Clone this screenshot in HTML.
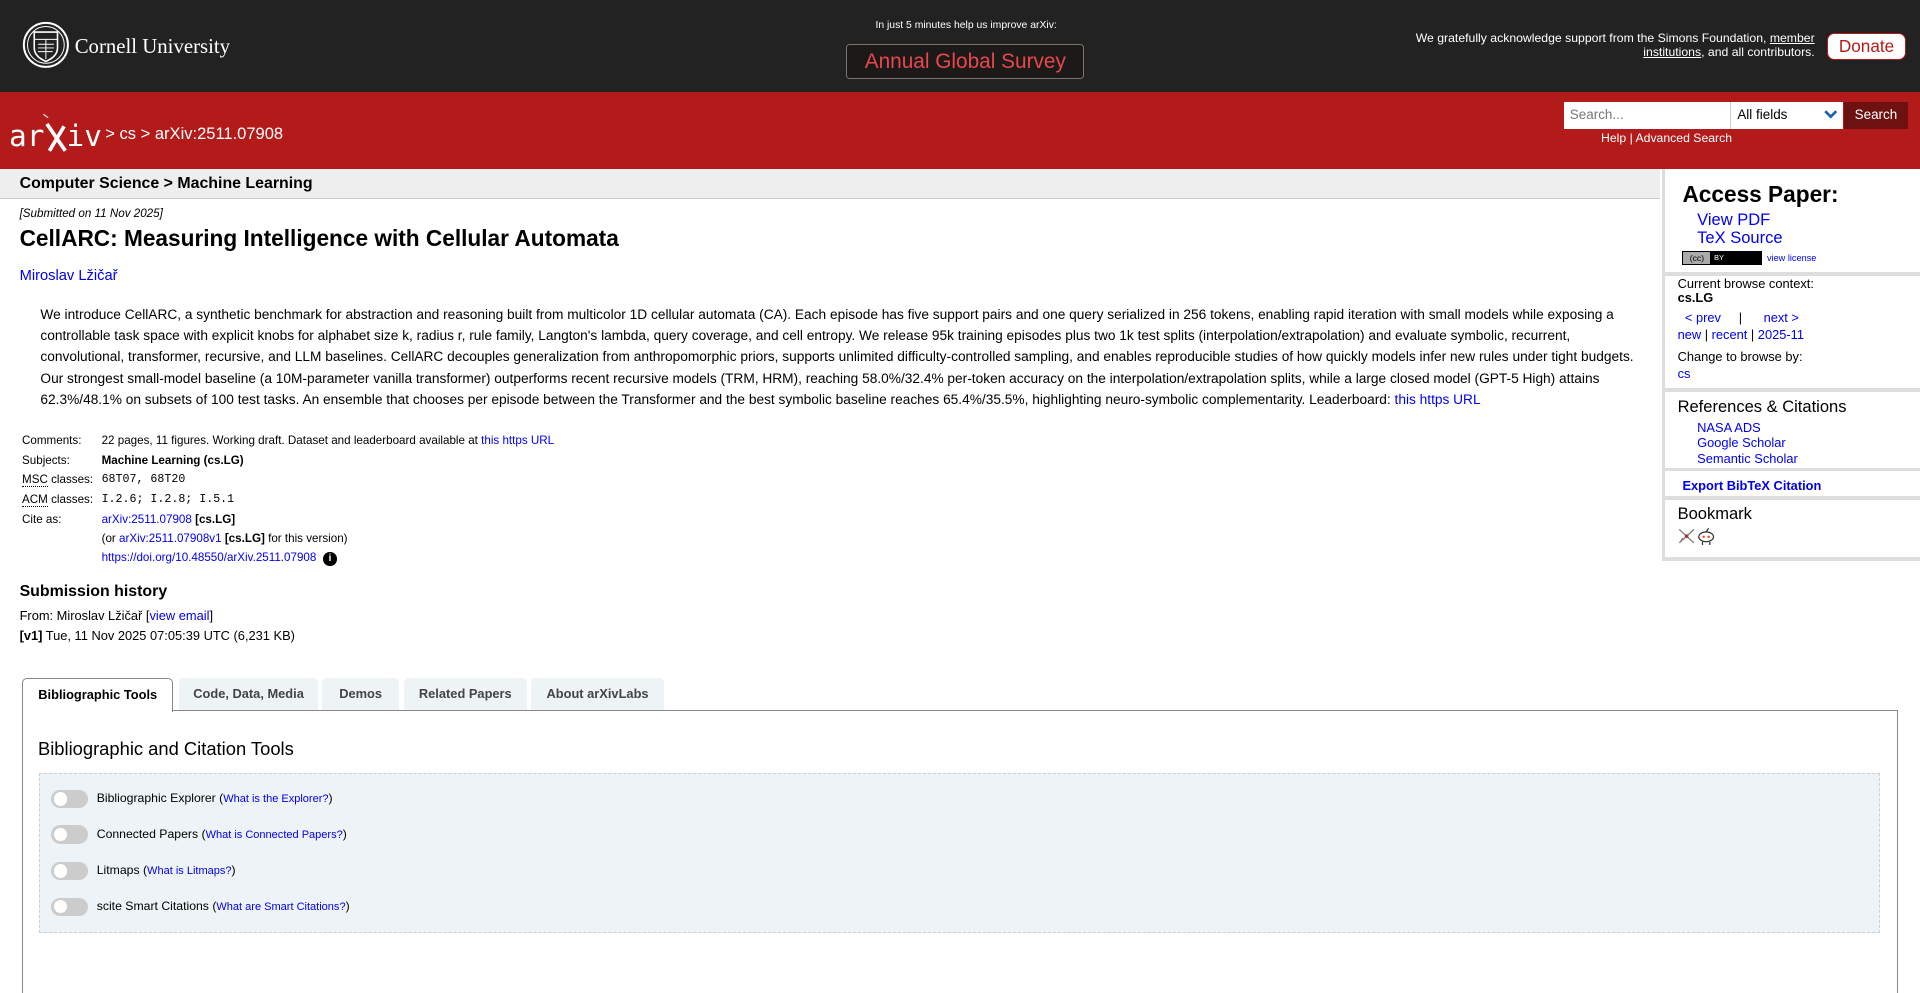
<!DOCTYPE html>
<html><head><meta charset="utf-8">
<style>
html,body{margin:0;padding:0;background:#fff;overflow:hidden;width:1920px;height:993px}
#w{zoom:1.2245;width:1568px;height:811px;position:relative;font-family:"Liberation Sans",Arial,sans-serif;color:#000}
a{color:#0000ee;text-decoration:none}
.abs{position:absolute}
#top{position:absolute;left:0;top:0;width:1568px;height:75px;background:#222}
#red{position:absolute;left:0;top:75px;width:1568px;height:63px;background:#b31b1b}
#crumb{position:absolute;left:0;top:138px;width:1356px;height:24px;background:#eee;border-bottom:1px solid #ccc}
#side{position:absolute;left:1357px;top:138px;width:211px;height:320px;border-left:3px solid #ddd}
.bar{position:absolute;left:1357px;width:211px;height:3px;background:#ddd}
.meta td{font-size:9.5px;padding:0 2px;height:16px;vertical-align:middle;white-space:nowrap}
.tab{position:absolute;top:554px;height:26px;background:#eef3f6;border-radius:4px 4px 0 0;font-size:10.5px;font-weight:bold;color:#444;text-align:center;line-height:26px}
.tog{position:absolute;left:42px;width:30px;height:15px;border-radius:8px;background:#ccc}
.tog:after{content:"";position:absolute;left:2px;top:2px;width:11px;height:11px;border-radius:50%;background:#fff}
.tl{position:absolute;left:79px;font-size:10px}
</style></head><body><div id="w">
<div id="top"></div>
<svg class="abs" style="left:18px;top:17px" width="39" height="39" viewBox="0 0 39 39"><circle cx="19.5" cy="19.5" r="18" fill="none" stroke="#fff" stroke-width="1.6"/><circle cx="19.5" cy="19.5" r="15" fill="none" stroke="#fff" stroke-width="0.8"/><path d="M10 9h19v13c0 6-5 9-9.5 11C15 31 10 28 10 22z" fill="none" stroke="#fff" stroke-width="1.3"/><path d="M10 15h19M19.5 15v16M13 19h13M13 22h13M13 25h12" stroke="#fff" stroke-width="0.8"/></svg>
<div class="abs" style="left:61px;top:28px;font-family:'Liberation Serif',serif;font-size:17px;color:#fff">Cornell University</div>
<div class="abs" style="left:689px;top:16px;width:200px;text-align:center;font-size:8.5px;color:#fff">In just 5 minutes help us improve arXiv:</div>
<div class="abs" style="left:691px;top:36px;width:193px;height:27px;border:1px solid #7a746c;border-radius:3px;background:#1c1a18;color:#e9474c;font-size:17px;text-align:center;line-height:27px">Annual Global Survey</div>
<div class="abs" style="left:1100px;top:25px;width:382px;text-align:right;font-size:10px;line-height:12px;color:#fff">We gratefully acknowledge support from the Simons Foundation, <u>member<br>institutions</u>, and all contributors.</div>
<div class="abs" style="left:1492px;top:27px;width:63px;height:20px;background:#fff;border:1px solid #b31b1b;border-radius:6px;color:#b31b1b;font-size:14px;text-align:center;line-height:20px">Donate</div>
<div id="red"></div>
<svg class="abs" style="left:7px;top:88px" width="80" height="38" viewBox="0 0 80 38"><text x="0" y="31" font-family="'DejaVu Sans Mono',monospace" font-size="24" fill="#fff">ar</text><path d="M31 13L46 35M45 15L33 35" stroke="#fff" stroke-width="3"/><path d="M28 5l4 3" stroke="#ddd" stroke-width="1"/><text x="47" y="31" font-family="'DejaVu Sans Mono',monospace" font-size="24" fill="#fff">iv</text></svg>
<div class="abs" style="left:86px;top:101px;font-size:13.5px;color:#fff">&gt; cs &gt; arXiv:2511.07908</div>
<div class="abs" style="left:1277px;top:83px;width:136px;height:22px;background:#fff;font-size:11px;color:#777;line-height:22px;box-sizing:border-box;padding-left:5px">Search...</div>
<div class="abs" style="left:1413px;top:83px;width:92px;height:22px;background:#fff;border-left:1px solid #ccc;box-sizing:border-box;font-size:11px;line-height:22px;padding-left:5px">All fields<svg style="position:absolute;right:4px;top:7px" width="11" height="8"><path d="M1 1l4.5 4.5L10 1" fill="none" stroke="#1a64b0" stroke-width="2.2"/></svg></div>
<div class="abs" style="left:1506px;top:83px;width:52px;height:22px;background:#6e1111;color:#fff;font-size:11px;text-align:center;line-height:22px">Search</div>
<div class="abs" style="left:1280px;top:107px;width:162px;text-align:center;font-size:10px;color:#fff">Help | Advanced Search</div>
<div id="crumb"></div>
<div class="abs" style="left:16px;top:143px;font-size:13px;font-weight:bold">Computer Science &gt; Machine Learning</div>
<div id="side"></div>
<div class="bar" style="top:222px"></div><div class="bar" style="top:317px"></div><div class="bar" style="top:382px"></div><div class="bar" style="top:405px"></div><div class="bar" style="top:455px"></div>
<div class="abs" style="left:1374px;top:148px;font-size:18.5px;font-weight:bold">Access Paper:</div>
<div class="abs" style="left:1386px;top:172px;font-size:13.5px;line-height:15px"><a>View PDF</a><br><a>TeX Source</a></div>
<div class="abs" style="left:1374px;top:205px;width:63px;height:10px;border:1px solid #000;background:#000"><div style="position:absolute;left:0;top:0;width:22px;height:10px;background:#aaa;font-size:7px;line-height:10px;text-align:center">(cc)</div><div style="position:absolute;left:25px;top:0;font-size:6px;color:#fff;line-height:10px">BY</div></div>
<div class="abs" style="left:1443px;top:207px;font-size:7.5px"><a>view license</a></div>
<div class="abs" style="left:1370px;top:226px;font-size:10.5px;line-height:12px">Current browse context:<br><b>cs.LG</b></div>
<div class="abs" style="left:1376px;top:253px;font-size:10.5px"><a>&lt; prev</a>&nbsp;&nbsp;&nbsp;&nbsp;&nbsp;|&nbsp;&nbsp;&nbsp;&nbsp;&nbsp;&nbsp;<a>next &gt;</a></div>
<div class="abs" style="left:1370px;top:267px;font-size:10.5px"><a>new</a> | <a>recent</a> | <a>2025-11</a></div>
<div class="abs" style="left:1370px;top:285px;font-size:10.5px">Change to browse by:</div>
<div class="abs" style="left:1370px;top:299px;font-size:10.5px"><a>cs</a></div>
<div class="abs" style="left:1370px;top:324px;font-size:13.5px">References &amp; Citations</div>
<div class="abs" style="left:1386px;top:343px;font-size:10.5px;line-height:12.5px"><a>NASA ADS</a><br><a>Google Scholar</a><br><a>Semantic Scholar</a></div>
<div class="abs" style="left:1374px;top:390px;font-size:10.5px;font-weight:bold"><a>Export BibTeX Citation</a></div>
<div class="abs" style="left:1370px;top:412px;font-size:13.5px">Bookmark</div>
<svg class="abs" style="left:1370px;top:430px" width="32" height="15"><path d="M1 2l12 11M13 2L1 13M4 9l-2 3M10 5l3-3" stroke="#777" stroke-width="1" fill="none"/><circle cx="7" cy="7.5" r="1.5" fill="#a33"/><ellipse cx="23" cy="8" rx="6" ry="4" fill="#fff" stroke="#333"/><circle cx="21" cy="8" r="1" fill="#f40"/><circle cx="25" cy="8" r="1" fill="#f40"/><path d="M23 4l2-3M20 12v3M26 12v3" stroke="#333"/></svg>
<div class="abs" style="left:16px;top:169px;font-size:9.5px;font-style:italic">[Submitted on 11 Nov 2025]</div>
<div class="abs" style="left:16px;top:184px;font-size:18.5px;font-weight:bold">CellARC: Measuring Intelligence with Cellular Automata</div>
<div class="abs" style="left:16px;top:219px;font-size:12px"><a>Miroslav Lžičař</a></div>
<div class="abs" style="left:33px;top:248px;width:1315px;font-size:11.2px;line-height:17.4px">We introduce CellARC, a synthetic benchmark for abstraction and reasoning built from multicolor 1D cellular automata (CA). Each episode has five support pairs and one query serialized in 256 tokens, enabling rapid iteration with small models while exposing a controllable task space with explicit knobs for alphabet size k, radius r, rule family, Langton's lambda, query coverage, and cell entropy. We release 95k training episodes plus two 1k test splits (interpolation/extrapolation) and evaluate symbolic, recurrent, convolutional, transformer, recursive, and LLM baselines. CellARC decouples generalization from anthropomorphic priors, supports unlimited difficulty-controlled sampling, and enables reproducible studies of how quickly models infer new rules under tight budgets. Our strongest small-model baseline (a 10M-parameter vanilla transformer) outperforms recent recursive models (TRM, HRM), reaching 58.0%/32.4% per-token accuracy on the interpolation/extrapolation splits, while a large closed model (GPT-5 High) attains 62.3%/48.1% on subsets of 100 test tasks. An ensemble that chooses per episode between the Transformer and the best symbolic baseline reaches 65.4%/35.5%, highlighting neuro-symbolic complementarity. Leaderboard: <a>this https URL</a></div>
<table class="meta abs" style="left:16px;top:352px;border-collapse:collapse">
<tr><td style="width:61px">Comments:</td><td>22 pages, 11 figures. Working draft. Dataset and leaderboard available at <a>this https URL</a></td></tr>
<tr><td>Subjects:</td><td><b>Machine Learning (cs.LG)</b></td></tr>
<tr><td><span style="border-bottom:1px dotted #000">MSC</span> classes:</td><td style="font-family:'Liberation Mono',monospace">68T07, 68T20</td></tr>
<tr><td><span style="border-bottom:1px dotted #000">ACM</span> classes:</td><td style="font-family:'Liberation Mono',monospace">I.2.6; I.2.8; I.5.1</td></tr>
<tr><td>Cite as:</td><td><a>arXiv:2511.07908</a> <b>[cs.LG]</b></td></tr>
<tr><td></td><td>(or <a>arXiv:2511.07908v1</a> <b>[cs.LG]</b> for this version)</td></tr>
<tr><td></td><td><a>https://doi.org/10.48550/arXiv.2511.07908</a> <span style="display:inline-block;width:11px;height:11px;border-radius:50%;background:#000;color:#fff;font-size:8px;font-weight:bold;text-align:center;line-height:11px;margin-left:3px">i</span></td></tr>
</table>
<div class="abs" style="left:16px;top:476px;font-size:13px;font-weight:bold">Submission history</div>
<div class="abs" style="left:16px;top:495px;font-size:10.5px;line-height:16px">From: Miroslav Lžičař [<a>view email</a>]<br><b>[v1]</b> Tue, 11 Nov 2025 07:05:39 UTC (6,231 KB)</div>
<div class="abs" style="left:18px;top:580px;width:1530px;height:240px;border:1px solid #888;border-bottom:none"></div>
<div class="tab" style="left:18px;width:122px;height:27px;background:#fff;border:1px solid #888;border-bottom:none;color:#000">Bibliographic Tools</div>
<div class="tab" style="left:146px;width:114px">Code, Data, Media</div>
<div class="tab" style="left:263px;width:63px">Demos</div>
<div class="tab" style="left:330px;width:100px">Related Papers</div>
<div class="tab" style="left:434px;width:108px">About arXivLabs</div>
<div class="abs" style="left:31px;top:603px;font-size:15px">Bibliographic and Citation Tools</div>
<div class="abs" style="left:32px;top:631px;width:1502px;height:129px;background:#edf3f6;border:1px dashed #c8d0d6"></div>
<div class="tog" style="top:645px"></div><div class="tl" style="top:646px">Bibliographic Explorer (<a style="font-size:9px">What is the Explorer?</a>)</div>
<div class="tog" style="top:674px"></div><div class="tl" style="top:675px">Connected Papers (<a style="font-size:9px">What is Connected Papers?</a>)</div>
<div class="tog" style="top:704px"></div><div class="tl" style="top:705px">Litmaps (<a style="font-size:9px">What is Litmaps?</a>)</div>
<div class="tog" style="top:733px"></div><div class="tl" style="top:734px">scite Smart Citations (<a style="font-size:9px">What are Smart Citations?</a>)</div>
</div></body></html>
